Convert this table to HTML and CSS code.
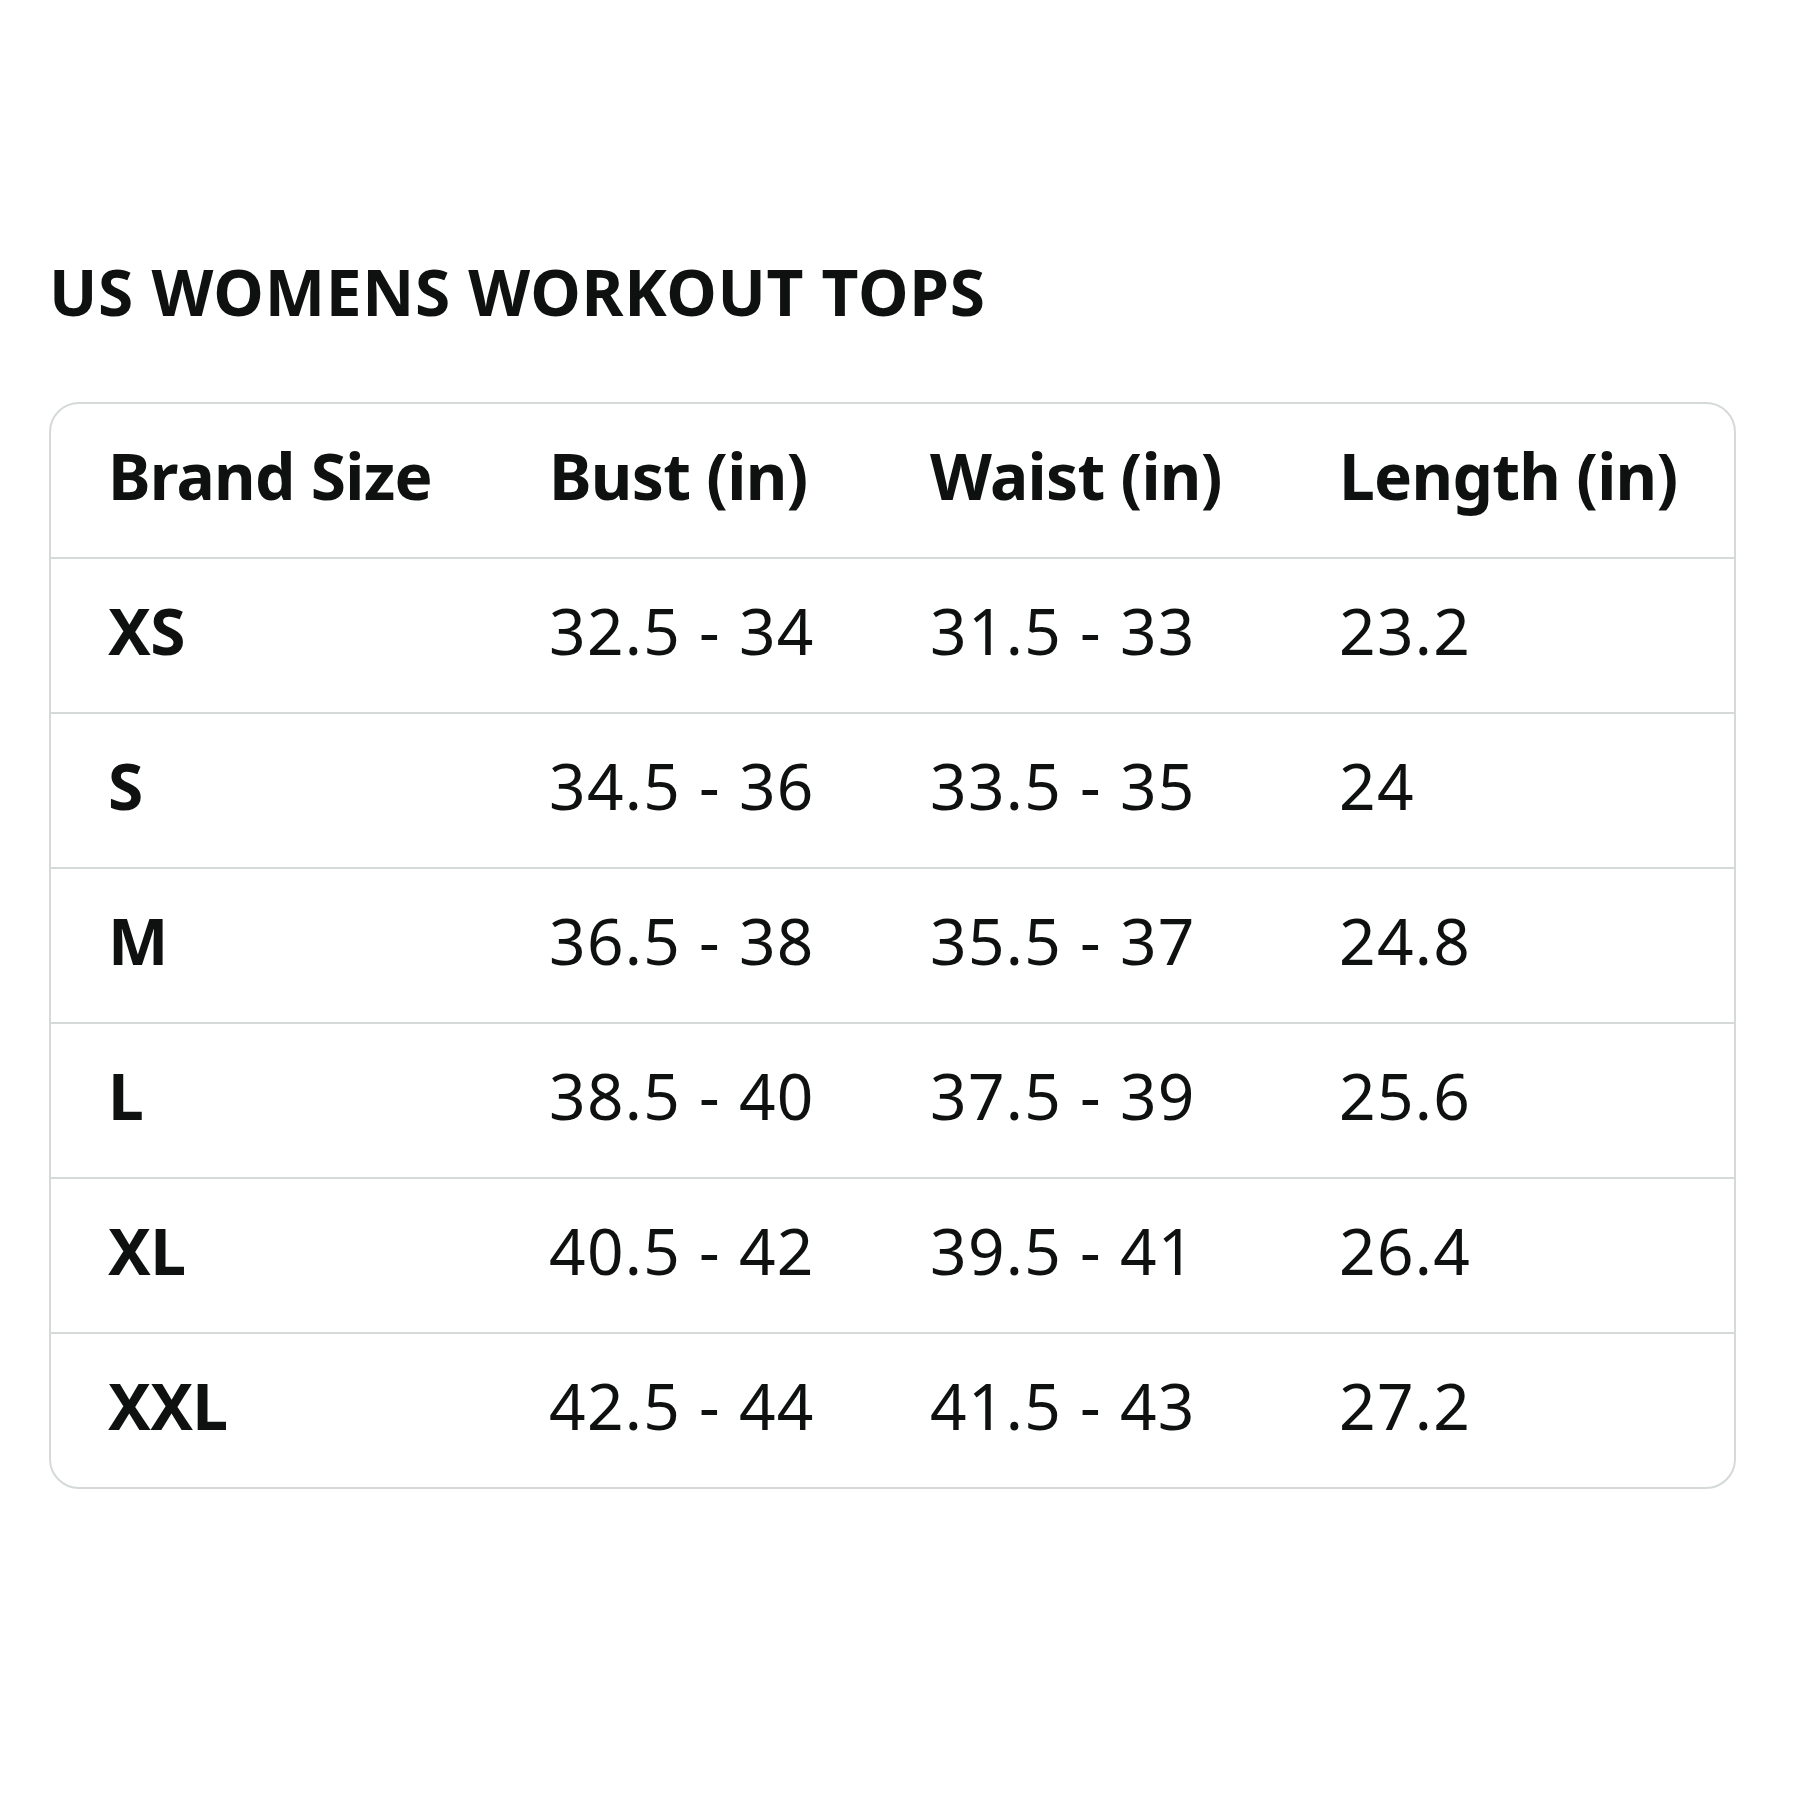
FILE: index.html
```html
<!DOCTYPE html>
<html lang="en">
<head>
<meta charset="utf-8">
<title>US Womens Workout Tops</title>
<link rel="stylesheet" href="styles.css">
</head>
<body>
<main class="page">
  <h1 class="title">US WOMENS WORKOUT TOPS</h1>
  <div class="chart">
    <div class="row head">
      <div class="cell">Brand Size</div>
      <div class="cell">Bust (in)</div>
      <div class="cell">Waist (in)</div>
      <div class="cell">Length (in)</div>
    </div>
    <div class="row">
      <div class="cell size">XS</div>
      <div class="cell">32.5 - 34</div>
      <div class="cell">31.5 - 33</div>
      <div class="cell">23.2</div>
    </div>
    <div class="row">
      <div class="cell size">S</div>
      <div class="cell">34.5 - 36</div>
      <div class="cell">33.5 - 35</div>
      <div class="cell">24</div>
    </div>
    <div class="row">
      <div class="cell size">M</div>
      <div class="cell">36.5 - 38</div>
      <div class="cell">35.5 - 37</div>
      <div class="cell">24.8</div>
    </div>
    <div class="row">
      <div class="cell size">L</div>
      <div class="cell">38.5 - 40</div>
      <div class="cell">37.5 - 39</div>
      <div class="cell">25.6</div>
    </div>
    <div class="row">
      <div class="cell size">XL</div>
      <div class="cell">40.5 - 42</div>
      <div class="cell">39.5 - 41</div>
      <div class="cell">26.4</div>
    </div>
    <div class="row">
      <div class="cell size">XXL</div>
      <div class="cell">42.5 - 44</div>
      <div class="cell">41.5 - 43</div>
      <div class="cell">27.2</div>
    </div>
  </div>
</main>
</body>
</html>
```
FILE: styles.css
```css
html, body {
  margin: 0;
  padding: 0;
  background: #ffffff;
}

body {
  font-family: "Noto Sans", "Open Sans", sans-serif;
  color: #0f1111;
}

.page {
  width: 1687px;
  padding: 260px 0 0 49px;
}

.title {
  margin: 0 0 78px 0;
  font-size: 64px;
  line-height: 64px;
  font-weight: 700;
  letter-spacing: 0.7px;
}

.chart {
  border: 2px solid #d5d9d9;
  border-radius: 30px;
  overflow: hidden;
}

.row {
  display: grid;
  grid-template-columns: 441px 381px 409px 1fr;
  padding-left: 57px;
  height: 153px;
  border-bottom: 2px solid #d5d9d9;
}

.row:last-child {
  border-bottom: none;
}

.cell {
  display: flex;
  align-items: center;
  padding-bottom: 10px;
  font-size: 64px;
  line-height: 64px;
  font-weight: 400;
  letter-spacing: 1.3px;
  white-space: nowrap;
}

.head .cell,
.cell.size {
  font-weight: 700;
  letter-spacing: -0.7px;
}
```
